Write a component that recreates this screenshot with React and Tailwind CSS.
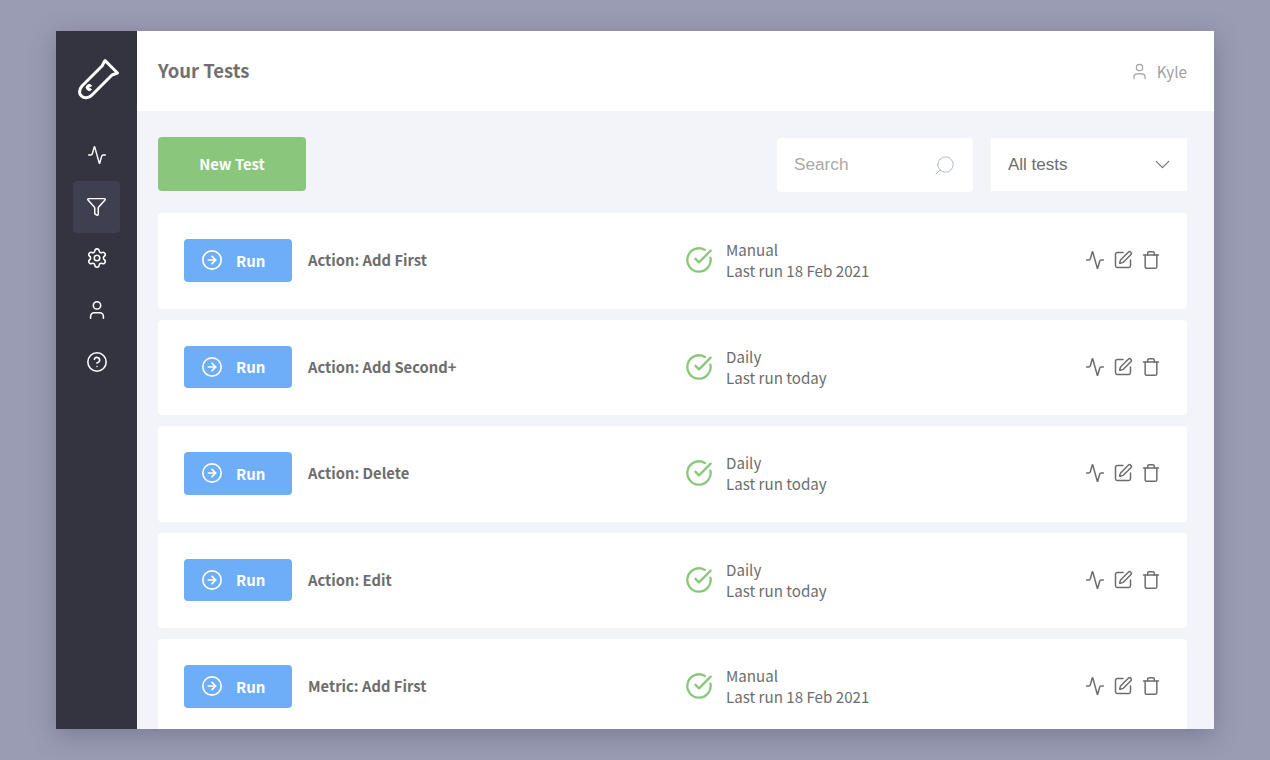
import React from "react";
import { Activity, Filter, Settings, User, HelpCircle, ArrowRightCircle, CheckCircle, Edit, Trash, Search, ChevronDown } from "lucide-react";

const font = "font-['Noto_Sans_CJK_SC','Noto_Sans',sans-serif]";

const rows = [
  ["Action: Add First", "Manual", "Last run 18 Feb 2021"],
  ["Action: Add Second+", "Daily", "Last run today"],
  ["Action: Delete", "Daily", "Last run today"],
  ["Action: Edit", "Daily", "Last run today"],
  ["Metric: Add First", "Manual", "Last run 18 Feb 2021"],
];

function Tube() {
  return (
    <svg width="42" height="42" viewBox="0 0 42 42" fill="none" stroke="white" strokeWidth="3" strokeLinecap="round" strokeLinejoin="round">
      <path d="M27 2.5 L24 8 L4 28 C0.5 32 1 36 3.5 38 C6 40.5 11 40.5 14 37 L34 17 L39.5 15 Z" />
      <path d="M13.5 27.5 A3 3 0 1 0 13.5 31.5 L10.5 29.5 Z" fill="white" strokeWidth="1" />
    </svg>
  );
}

function Row({ name, mode, last }) {
  return (
    <div className="flex h-[95.5px] shrink-0 items-center rounded-[4px] bg-white pb-[1px] pl-[26px]">
      <button className="flex h-[42.5px] w-[108px] items-center rounded-[4px] bg-[#6eaef8] pl-[17px] text-white">
        <ArrowRightCircle size={22} strokeWidth={1.8} />
        <span className="ml-[13px] text-[15px] font-bold leading-none">Run</span>
      </button>
      <div className="ml-[16px] w-[377px] text-[14.75px] font-bold text-[#6d6d6d]">{name}</div>
      <CheckCircle size={28} strokeWidth={2} className="text-[#8ac77c]" />
      <div className="ml-[13px] w-[359px] text-[15.15px] leading-[21px] text-[#6d6d6d]">
        <div>{mode}</div>
        <div>{last}</div>
      </div>
      <div className="flex items-center gap-[8px] text-[#6d6d6d]">
        <Activity size={20} strokeWidth={1.8} />
        <Edit size={20} strokeWidth={1.8} />
        <Trash size={20} strokeWidth={1.8} />
      </div>
    </div>
  );
}

export default function App() {
  const nav = [
    [Activity, 20],
    [Filter, 21],
    [Settings, 22],
    [User, 22],
    [HelpCircle, 22],
  ];
  return (
    <div className={`h-[760px] w-full overflow-hidden bg-[#9a9cb3] pl-[56px] pt-[31px] ${font}`}>
      <div className="flex h-[698px] w-[1158px] overflow-hidden shadow-[0_6px_24px_rgba(60,60,90,0.35)]">
        <aside className="flex w-[81px] shrink-0 flex-col items-center bg-[#343441]">
          <div className="mt-[27px] mb-[29px] ml-[5px] flex h-[42px] items-center justify-center"><Tube /></div>
          {nav.map(([Icon, size], i) => (
            <div key={i} className={`flex h-[51.75px] w-[47px] items-center justify-center rounded-[4px] text-white ${i === 1 ? "bg-[#3e3f4f]" : ""}`}>
              <Icon size={size} strokeWidth={1.7} />
            </div>
          ))}
        </aside>
        <main className="flex min-w-0 flex-1 flex-col bg-[#f2f4f9]">
          <header className="flex h-[80px] shrink-0 items-center justify-between bg-white pl-[21px] pr-[27px]">
            <h1 className="text-[18.5px] font-bold text-[#707070]">Your Tests</h1>
            <div className="flex items-center gap-[8px] text-[15.3px] text-[#a0a0a0]">
              <User size={19} strokeWidth={1.5} />
              <span>Kyle</span>
            </div>
          </header>
          <div className="flex min-h-0 flex-1 flex-col pl-[21px] pr-[27px] pt-[26px]">
            <div className="flex h-[54px] shrink-0 items-start">
              <button className="h-[54px] w-[148px] rounded-[4px] bg-[#8ac77c] text-[14.75px] font-bold text-white">New Test</button>
              <div className="ml-auto mt-[1px] flex h-[54px] w-[196px] items-center justify-between rounded-[4px] bg-white pl-[17px] pr-[17px] font-['Liberation_Sans',sans-serif] text-[17.2px] text-[#a8a8a8]">
                <span>Search</span>
                <Search size={23} strokeWidth={1} className="-scale-x-100 text-[#aeb6c8]" />
              </div>
              <div className="ml-[18px] mt-[1px] flex h-[53px] w-[196px] items-center justify-between bg-white pl-[17px] pr-[12px] font-['Liberation_Sans',sans-serif] text-[17px] text-[#6d6d6d]">
                <span>All tests</span>
                <ChevronDown size={25} strokeWidth={1.2} className="text-[#777777]" />
              </div>
            </div>
            <div className="mt-[22px] flex flex-col gap-[11px]">
              {rows.map((r) => (
                <Row key={r[0]} name={r[0]} mode={r[1]} last={r[2]} />
              ))}
            </div>
          </div>
        </main>
      </div>
    </div>
  );
}
